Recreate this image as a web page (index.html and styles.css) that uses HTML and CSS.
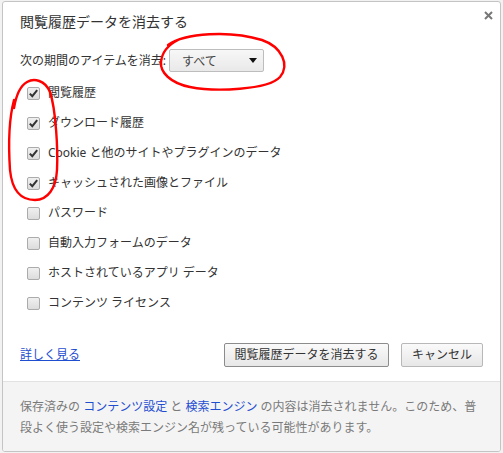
FILE: index.html
```html
<!DOCTYPE html>
<html lang="ja">
<head>
<meta charset="utf-8">
<title>閲覧履歴データを消去する</title>
<link rel="stylesheet" href="styles.css">
</head>
<body>
<div class="dialog">
  <div class="main">
    <div class="header">
      <h1 class="title">閲覧履歴データを消去する</h1>
      <span class="close"><svg width="9" height="9" viewBox="0 0 9 9"><path d="M1 1 L8 8 M8 1 L1 8" stroke="#777" stroke-width="2"/></svg></span>
    </div>
    <div class="period">
      <span class="period-label">次の期間のアイテムを消去:</span>
      <div class="select"><span>すべて</span><svg class="arrow" width="8" height="5" viewBox="0 0 8 5"><path d="M0 0 H8 L4 5 Z" fill="#111"/></svg></div>
    </div>
    <ul class="items">
      <li class="item"><span class="cb checked"><svg width="11" height="11" viewBox="0 0 11 11"><path d="M1.8 5.6 L4.3 8.2 L9.2 2.2" fill="none" stroke="#333" stroke-width="2"/></svg></span><span>閲覧履歴</span></li>
      <li class="item"><span class="cb checked"><svg width="11" height="11" viewBox="0 0 11 11"><path d="M1.8 5.6 L4.3 8.2 L9.2 2.2" fill="none" stroke="#333" stroke-width="2"/></svg></span><span>ダウンロード履歴</span></li>
      <li class="item"><span class="cb checked"><svg width="11" height="11" viewBox="0 0 11 11"><path d="M1.8 5.6 L4.3 8.2 L9.2 2.2" fill="none" stroke="#333" stroke-width="2"/></svg></span><span>Cookie と他のサイトやプラグインのデータ</span></li>
      <li class="item"><span class="cb checked"><svg width="11" height="11" viewBox="0 0 11 11"><path d="M1.8 5.6 L4.3 8.2 L9.2 2.2" fill="none" stroke="#333" stroke-width="2"/></svg></span><span>キャッシュされた画像とファイル</span></li>
      <li class="item"><span class="cb"></span><span>パスワード</span></li>
      <li class="item"><span class="cb"></span><span>自動入力フォームのデータ</span></li>
      <li class="item"><span class="cb"></span><span>ホストされているアプリ データ</span></li>
      <li class="item"><span class="cb"></span><span>コンテンツ ライセンス</span></li>
    </ul>
    <div class="actions">
      <a class="link" href="#">詳しく見る</a>
      <div class="buttons">
        <button class="btn btn-default">閲覧履歴データを消去する</button>
        <button class="btn">キャンセル</button>
      </div>
    </div>
  </div>
  <div class="footer">
    <p>保存済みの <a class="flink" href="#">コンテンツ設定</a> と <a class="flink" href="#">検索エンジン</a> の内容は消去されません。このため、普<br>段よく使う設定や検索エンジン名が残っている可能性があります。</p>
  </div>
</div>
<svg class="annot" width="503" height="453" viewBox="0 0 503 453">
  <path d="M168 45 C185 33 230 30 262 40 C282 47 290 65 280 77 C268 90 215 92 190 87 C170 83 160 72 161 62 C162 52 168 45 178 40" fill="none" stroke="#f00" stroke-width="2.4" stroke-linecap="round"/>
  <path d="M14 108 C16 96 20 86 27 82 C34 78 45 80 50 92 C56 110 58 150 57 170 C56 188 48 200 35 200 C20 200 12 190 10 170 C8 140 10 115 14 100" fill="none" stroke="#f00" stroke-width="2.4" stroke-linecap="round"/>
</svg>
</body>
</html>
```

FILE: styles.css
```css
* { box-sizing: border-box; }
html, body { margin: 0; padding: 0; }
body {
  width: 503px;
  height: 453px;
  background: #f2f2f2;
  font-family: "Noto Sans", "Noto Sans CJK JP", sans-serif;
  font-size: 12px;
  color: #333;
  position: relative;
  overflow: hidden;
}
.dialog {
  margin: 1px 0 0 2px;
  width: 499px;
  height: 451px;
  border: 1px solid #c4c4c4;
  border-radius: 3px;
  background: #fff;
  display: flex;
  flex-direction: column;
  position: relative;
  overflow: hidden;
}
.main {
  height: 379px;
  padding: 0 17px;
}
.header {
  padding-top: 10px;
  height: 30px;
}
.title {
  margin: 0;
  font-size: 14px;
  font-weight: normal;
  line-height: 20px;
  color: #333;
}
.close {
  position: absolute;
  top: 9px;
  right: 7px;
  display: flex;
}
.period {
  margin-top: 17px;
  display: flex;
  align-items: center;
  gap: 3px;
  height: 23px;
}
.period-label { line-height: 16px; }
.select {
  width: 95px;
  height: 23px;
  border: 1px solid #bdbdbd;
  border-radius: 2px;
  background: linear-gradient(#f7f7f7, #e9e9e9);
  display: flex;
  align-items: center;
  justify-content: space-between;
  padding: 0 6px 0 12px;
  color: #444;
}
.items {
  list-style: none;
  margin: 6px 0 0;
  padding: 0;
}
.item {
  height: 30px;
  display: flex;
  align-items: center;
  gap: 8px;
  padding-left: 7px;
  line-height: 16px;
}
.cb {
  width: 13px;
  height: 13px;
  border: 1px solid #ababab;
  border-radius: 2px;
  background: linear-gradient(#f0f0f0, #dcdcdc);
  display: flex;
  align-items: center;
  justify-content: center;
  flex: none;
}
.actions {
  margin-top: 25px;
  height: 24px;
  display: flex;
  align-items: center;
  justify-content: space-between;
}
.link {
  color: #1f4ed1;
  text-decoration: underline;
  line-height: 16px;
}
.buttons {
  display: flex;
  gap: 12px;
}
.btn {
  height: 24px;
  padding: 0;
  border: 1px solid #b8b8b8;
  border-radius: 2px;
  background: linear-gradient(#fafafa, #e7e7e7);
  font-family: "Noto Sans", "Noto Sans CJK JP", sans-serif;
  font-size: 12px;
  color: #333;
  width: 82px;
  line-height: 16px;
}
.btn-default {
  width: 165px;
  border-color: #8c8c8c;
}
.footer {
  flex: 1;
  border-top: 1px solid #e2e2e2;
  background: #f4f4f4;
  padding: 14px 17px 0;
}
.footer p {
  margin: 0;
  line-height: 21px;
  color: #7a7a7a;
}
.flink {
  color: #1f4ed1;
  text-decoration: none;
}
.annot {
  position: absolute;
  left: 0;
  top: 0;
  pointer-events: none;
}
```
